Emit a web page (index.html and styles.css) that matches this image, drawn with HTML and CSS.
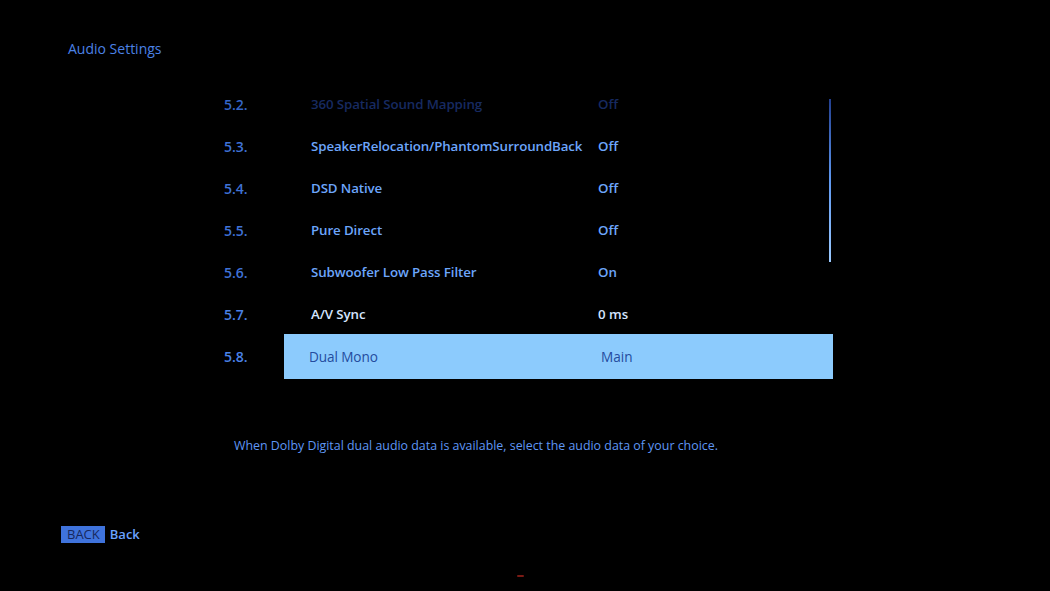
FILE: index.html
```html
<!DOCTYPE html>
<html>
<head>
<meta charset="utf-8">
<link rel="stylesheet" href="styles.css">
</head>
<body>
<div class="screen">
  <header class="title">Audio Settings</header>
  <div class="list">
    <div class="row faded"><span class="num">5.2.</span><div class="cell"><span class="label">360 Spatial Sound Mapping</span><span class="value">Off</span></div></div>
    <div class="row"><span class="num">5.3.</span><div class="cell"><span class="label">SpeakerRelocation/PhantomSurroundBack</span><span class="value">Off</span></div></div>
    <div class="row"><span class="num">5.4.</span><div class="cell"><span class="label">DSD Native</span><span class="value">Off</span></div></div>
    <div class="row"><span class="num">5.5.</span><div class="cell"><span class="label">Pure Direct</span><span class="value">Off</span></div></div>
    <div class="row"><span class="num">5.6.</span><div class="cell"><span class="label">Subwoofer Low Pass Filter</span><span class="value">On</span></div></div>
    <div class="row near"><span class="num">5.7.</span><div class="cell"><span class="label">A/V Sync</span><span class="value">0 ms</span></div></div>
    <div class="row selected"><span class="num">5.8.</span><div class="cell"><span class="label">Dual Mono</span><span class="value">Main</span></div></div>
    <div class="scrollbar"></div>
  </div>
  <p class="desc">When Dolby Digital dual audio data is available, select the audio data of your choice.</p>
  <footer class="footer"><span class="key">BACK</span><span class="keylabel">Back</span></footer>
  <div class="led"></div>
</div>
</body>
</html>
```
FILE: styles.css
```css
html, body {
  margin: 0;
  padding: 0;
  background: #000;
}
body {
  font-family: "Open Sans", "Noto Sans", sans-serif;
  width: 1050px;
  height: 591px;
  overflow: hidden;
}
.screen {
  position: relative;
  width: 1050px;
  height: 591px;
  display: flex;
  flex-direction: column;
}
.title {
  margin: 39px 0 0 68px;
  font-size: 14px;
  line-height: 20px;
  color: #4b82e6;
}
.list {
  position: relative;
  margin: 24px 0 0 224px;
  width: 609px;
  display: flex;
  flex-direction: column;
}
.row {
  display: flex;
  align-items: center;
  height: 42px;
}
.num {
  width: 60px;
  font-size: 14px;
  color: #3f72d6;
  font-weight: 600;
}
.cell {
  flex: 1;
  display: flex;
  align-items: center;
  height: 100%;
  padding-left: 27px;
  font-size: 13.3px;
  font-weight: 600;
  color: #6da6fb;
}
.label {
  width: 287px;
  letter-spacing: -0.1px;
}
.faded .cell { color: #172a60; }
.faded .num { color: #3566c8; }
.near .cell { color: #d4e4ff; }
.near .num { color: #4a80e6; }
.selected {
  height: 45px;
  margin-top: -1px;
}
.selected .cell {
  background: #8ccbfd;
  color: #244c9e;
  font-weight: 400;
  font-size: 13.6px;
  padding-left: 25px;
}
.selected .label { width: 292px; }
.selected .num { color: #4a82e8; }
.scrollbar {
  position: absolute;
  right: 2px;
  top: 16px;
  width: 2px;
  height: 163px;
  background: linear-gradient(#223f90, #5f98f0 50%, #9ccaff);
}
.desc {
  margin: 58px 0 0 234px;
  font-size: 12.4px;
  line-height: 18px;
  color: #5f97f5;
}
.footer {
  margin: 70px 0 0 61px;
  display: flex;
  align-items: center;
  gap: 5px;
}
.key {
  background: #3f73dc;
  color: #17285e;
  font-size: 13px;
  line-height: 17px;
  padding: 0 5px 0 6px;
}
.keylabel {
  color: #6aa2ff;
  font-size: 13px;
  font-weight: 600;
}
.led {
  position: absolute;
  left: 517px;
  top: 575px;
  width: 7px;
  height: 2px;
  border-radius: 1px;
  background: #7a1a14;
}
```
